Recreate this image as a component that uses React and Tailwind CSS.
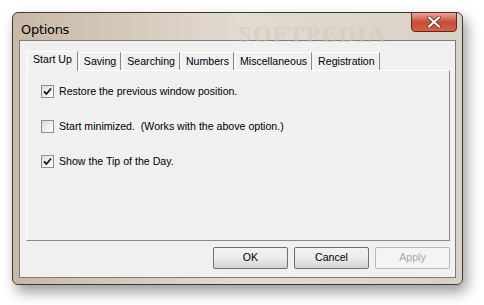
import { useState } from 'react';

const tabs = ['Start Up', 'Saving', 'Searching', 'Numbers', 'Miscellaneous', 'Registration'];

function CheckBox({ checked }) {
  return (
    <span className="w-[13px] h-[13px] border border-[#8e8f8f] bg-gradient-to-br from-[#dcdcdc] to-white flex items-center justify-center shrink-0">
      {checked && (
        <svg width="9" height="9" viewBox="0 0 9 9">
          <path d="M1 4.5 L3.5 7 L8 1.5" fill="none" stroke="#1a1a1a" strokeWidth="1.8" />
        </svg>
      )}
    </span>
  );
}

function Option({ checked, label }) {
  return (
    <label className="flex items-center gap-[5px] h-[13px]">
      <CheckBox checked={checked} />
      <span className="text-[10.6px] text-black leading-none whitespace-pre">{label}</span>
    </label>
  );
}

function Btn({ children, disabled }) {
  return (
    <button
      className={
        'w-[75px] h-[22px] text-[10.6px] rounded-[2px] border flex items-center justify-center ' +
        (disabled
          ? 'border-[#b5b9bc] bg-[#f4f4f4] text-[#a8a8a8]'
          : 'border-[#707070] bg-gradient-to-b from-[#f2f2f2] via-[#ebebeb] to-[#d3d3d3] text-black')
      }
    >
      {children}
    </button>
  );
}

export default function App() {
  const [active, setActive] = useState(0);

  return (
    <div className="w-[484px] h-[305px] bg-white pt-[12px] pl-[12px] font-['Liberation_Sans',Arial,sans-serif]">
      <div className="w-[451px] h-[273px] rounded-[6px] border border-[#3a3a3a] bg-gradient-to-r from-[#c8b8a6] via-[#e3dad0] to-[#d9d0c6] shadow-[4px_7px_14px_rgba(0,0,0,0.4)] flex flex-col">
        {/* title bar */}
        <div className="h-[27px] flex items-start justify-between pl-[8px] pr-[5px] relative">
          <span className="text-[13px] text-black mt-[7px] font-['DejaVu_Sans',sans-serif] tracking-[-0.3px]">Options</span>
          <span className="absolute left-[225px] top-[3px] text-[24px] font-bold text-[#d4c8bd] opacity-50 font-['Liberation_Serif',serif] tracking-wider">SOFTPEDIA</span>
          <button className="w-[46px] h-[20px] -mt-px rounded-b-[4px] border border-[#5a2a22] bg-gradient-to-b from-[#e8a89a] via-[#c74a35] to-[#d4604a] flex items-center justify-center">
            <svg width="14" height="12" viewBox="0 0 14 12">
              <path d="M2 1.5 L12 10.5 M12 1.5 L2 10.5" stroke="#4a2a24" strokeWidth="3.6" strokeLinecap="round" />
              <path d="M2 1.5 L12 10.5 M12 1.5 L2 10.5" stroke="#ffffff" strokeWidth="2.2" strokeLinecap="round" />
            </svg>
          </button>
        </div>

        {/* client */}
        <div className="mx-[6px] h-[238px] border border-[#7c7c7c] bg-[#f0f0f0] pt-[9px] px-[6px] flex flex-col">
          <div className="flex items-end h-[20px] pl-[1px]">
            {tabs.map((t, i) => (
              <button
                key={t}
                onClick={() => setActive(i)}
                className={
                  'text-[10.6px] text-black border-t border-l border-r flex items-center ' +
                  (i === active
                    ? 'h-[20px] px-[5px] bg-[#f0f0f0] border-white border-r-[#8a8a8a] -mb-px z-10 pb-[3px]'
                    : 'h-[18px] px-[4px] bg-[#f0f0f0] border-white border-r-[#8a8a8a] ml-px')
                }
              >
                {t}
              </button>
            ))}
          </div>
          <div className="h-[171px] w-[424px] border border-white border-r-[#8a8a8a] border-b-[#8a8a8a] pl-[14px] pt-[14px] flex flex-col gap-[22px]">
            <Option checked label="Restore the previous window position." />
            <Option label="Start minimized.  (Works with the above option.)" />
            <Option checked label="Show the Tip of the Day." />
          </div>
          <div className="flex justify-end gap-[6px] mt-[6px] w-[424px]">
            <Btn>OK</Btn>
            <Btn>Cancel</Btn>
            <Btn disabled>Apply</Btn>
          </div>
        </div>
      </div>
    </div>
  );
}
